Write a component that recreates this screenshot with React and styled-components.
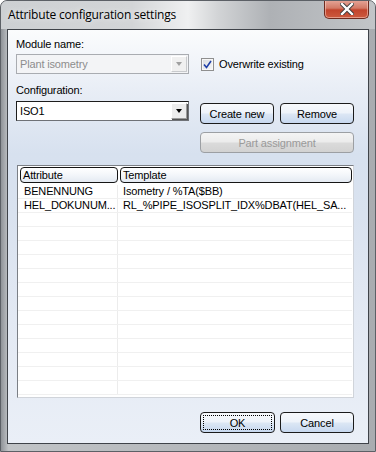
import React from 'react';
import styled, { createGlobalStyle } from 'styled-components';

const GlobalStyle = createGlobalStyle`
  html, body {
    margin: 0;
    padding: 0;
    background: #ffffff;
  }
  body {
    font-family: "Liberation Sans", Arial, sans-serif;
    font-size: 11px;
    letter-spacing: -0.15px;
    color: #000;
  }
`;

const Window = styled.div`
  width: 376px;
  height: 452px;
  box-sizing: border-box;
  display: flex;
  flex-direction: column;
  border: 1px solid #5c6066;
  border-radius: 7px 7px 0 0;
  background: linear-gradient(90deg, #8f9398 0%, #c1c4c7 2%, #a9acb0 100%);
  overflow: hidden;
`;

const TitleBar = styled.div`
  height: 28px;
  display: flex;
  align-items: flex-start;
  justify-content: space-between;
  padding: 0 6px 0 7px;
  background: linear-gradient(
    90deg,
    #cdd0d3 0%,
    #d3d5d7 35%,
    #eff0f1 50%,
    #d2d4d6 58%,
    #aeb1b5 72%,
    #c2c5c8 100%
  );
`;

const Title = styled.span`
  font-family: "Open Sans", "Noto Sans", sans-serif;
  font-size: 12px;
  line-height: 16px;
  margin-top: 6px;
  color: #000;
  letter-spacing: -0.2px;
  text-shadow: 0 0 6px rgba(255, 255, 255, 0.9);
`;

const CloseButton = styled.div`
  width: 45px;
  height: 19px;
  margin-top: -1px;
  box-sizing: border-box;
  border: 1px solid #6e2b1f;
  border-top: none;
  border-radius: 0 0 5px 5px;
  background: linear-gradient(180deg, #e6a79a 0%, #d37a66 45%, #c2442c 55%, #cc5a3e 100%);
  box-shadow: inset 0 0 0 1px rgba(255, 220, 210, 0.5);
  display: flex;
  align-items: center;
  justify-content: center;
`;

const Client = styled.div`
  flex: 1;
  margin: 0 6px 7px 6px;
  border: 1px solid #3f4349;
  background: linear-gradient(
    180deg,
    #fbfcfd 0%,
    #e9eef6 14%,
    #d7e1ef 30%,
    #d9e2ef 45%,
    #e3e9f3 70%,
    #eaeff7 100%
  );
  padding: 8px 14px 0 8px;
  display: flex;
  flex-direction: column;
`;

const TopGrid = styled.div`
  display: grid;
  grid-template-columns: 173px 154px;
  column-gap: 11px;
`;

const Column = styled.div`
  display: flex;
  flex-direction: column;
  padding-top: ${(p) => p.$top || 0}px;
`;

const Label = styled.div`
  height: 13px;
  line-height: 13px;
  margin-top: ${(p) => p.$top || 0}px;
  white-space: nowrap;
`;

const Combo = styled.div`
  height: 20px;
  margin-top: ${(p) => p.$top || 0}px;
  box-sizing: border-box;
  display: flex;
  align-items: stretch;
  border: 1px solid ${(p) => (p.$disabled ? '#a9acb1' : '#6f7277')};
  border-top-color: ${(p) => (p.$disabled ? '#a9acb1' : '#1d1d1d')};
  border-left-color: ${(p) => (p.$disabled ? '#a9acb1' : '#1d1d1d')};
  background: ${(p) => (p.$disabled ? '#f3f4f6' : '#ffffff')};
  color: ${(p) => (p.$disabled ? '#8d8d8d' : '#000')};
`;

const ComboText = styled.div`
  flex: 1;
  padding-left: 3px;
  line-height: 18px;
`;

const ComboArrow = styled.div`
  width: 16px;
  margin: 1px;
  box-sizing: border-box;
  border: 1px solid ${(p) => (p.$disabled ? '#c8cacd' : '#9a9a9a')};
  border-top-color: #ffffff;
  border-left-color: #ffffff;
  background: ${(p) => (p.$disabled ? '#f0f0f0' : '#ececec')};
  box-shadow: ${(p) => (p.$disabled ? 'none' : '1px 1px 0 #555')};
  display: flex;
  align-items: center;
  justify-content: center;
  &::after {
    content: '';
    border-left: 3.5px solid transparent;
    border-right: 3.5px solid transparent;
    border-top: 4px solid ${(p) => (p.$disabled ? '#a0a0a0' : '#000')};
  }
`;

const CheckRow = styled.label`
  height: 20px;
  display: flex;
  align-items: center;
  gap: 5px;
  padding-left: 1px;
`;

const CheckBox = styled.span`
  width: 13px;
  height: 13px;
  box-sizing: border-box;
  border: 1px solid #8f8f8f;
  background: linear-gradient(135deg, #d9dcdf 0%, #f5f6f7 100%);
  box-shadow: inset 0 0 0 1px #f7f7f7;
  display: flex;
  align-items: center;
  justify-content: center;
`;

const ButtonRow = styled.div`
  display: flex;
  justify-content: ${(p) => p.$justify || 'space-between'};
  gap: ${(p) => p.$gap || 0}px;
  margin-top: ${(p) => p.$top || 0}px;
`;

const Button = styled.div`
  width: ${(p) => p.$width || 74}px;
  height: 21px;
  box-sizing: border-box;
  border: 1px solid ${(p) => (p.$disabled ? '#9c9fa3' : '#1b1b1b')};
  border-radius: 4px;
  background: ${(p) =>
    p.$disabled
      ? 'linear-gradient(180deg, #f4f4f4 0%, #ececec 45%, #dadada 55%, #d2d2d2 100%)'
      : 'linear-gradient(180deg, #f7f9fc 0%, #eef3fa 45%, #dbe6f4 55%, #c7d8ef 100%)'};
  color: ${(p) => (p.$disabled ? '#9a9a9a' : '#000')};
  display: flex;
  align-items: center;
  justify-content: center;
  padding: 2px;
`;

const FocusRect = styled.div`
  flex: 1;
  align-self: stretch;
  border: 1px dotted ${(p) => (p.$on ? '#000' : 'transparent')};
  display: flex;
  align-items: center;
  justify-content: center;
`;

const List = styled.div`
  margin: 12px 0 0 1px;
  height: 233px;
  box-sizing: border-box;
  border: 1px solid #7b7f85;
  border-right-color: #d0d4da;
  border-bottom-color: #d0d4da;
  background: #ffffff;
  padding: 1px 1px 0 2px;
  overflow: hidden;
`;

const HeaderRow = styled.div`
  display: grid;
  grid-template-columns: 98px 1fr;
  gap: 2px;
  height: 16px;
  margin-bottom: 2px;
`;

const HeaderCell = styled.div`
  box-sizing: border-box;
  border: 1px solid #151515;
  border-radius: 4px;
  background: linear-gradient(180deg, #ffffff 0%, #f3f6fa 50%, #e4eaf2 100%);
  padding-left: 2px;
  line-height: 14px;
`;

const Row = styled.div`
  display: grid;
  grid-template-columns: 100px 1fr;
  height: 14px;
  box-sizing: border-box;
  border-bottom: 1px solid #f0f0f0;
  margin-left: -2px;
`;

const Cell = styled.div`
  padding-left: ${(p) => p.$pad || 6}px;
  line-height: 13px;
  white-space: nowrap;
  overflow: hidden;
  border-right: ${(p) => (p.$divider ? '1px solid #ececec' : 'none')};
`;

const rows = [
  ['BENENNUNG', 'Isometry / %TA($BB)'],
  ['HEL_DOKUNUM...', 'RL_%PIPE_ISOSPLIT_IDX%DBAT(HEL_SA...'],
];

const emptyRows = Array.from({ length: 13 });

const App = () => {
  return (
    <>
      <GlobalStyle />
      <Window>
        <TitleBar>
          <Title>Attribute configuration settings</Title>
          <CloseButton>
            <svg width="14" height="12" viewBox="0 0 14 12">
              <path
                d="M2 1 L12 11 M12 1 L2 11"
                stroke="#3c3c3c"
                strokeWidth="4.2"
                strokeLinecap="square"
              />
              <path
                d="M2 1 L12 11 M12 1 L2 11"
                stroke="#ffffff"
                strokeWidth="2.4"
                strokeLinecap="square"
              />
            </svg>
          </CloseButton>
        </TitleBar>
        <Client>
          <TopGrid>
            <Column>
              <Label>Module name:</Label>
              <Combo $top={3} $disabled>
                <ComboText>Plant isometry</ComboText>
                <ComboArrow $disabled />
              </Combo>
              <Label $top={10}>Configuration:</Label>
              <Combo $top={4}>
                <ComboText>ISO1</ComboText>
                <ComboArrow />
              </Combo>
            </Column>
            <Column $top={16}>
              <CheckRow>
                <CheckBox>
                  <svg width="9" height="9" viewBox="0 0 9 9">
                    <path
                      d="M1 4.5 L3.5 7.5 L8 1"
                      fill="none"
                      stroke="#1f3fa8"
                      strokeWidth="1.6"
                    />
                  </svg>
                </CheckBox>
                <span>Overwrite existing</span>
              </CheckRow>
              <ButtonRow $top={29}>
                <Button $width={74}>Create new</Button>
                <Button $width={74}>Remove</Button>
              </ButtonRow>
              <ButtonRow $top={8}>
                <Button $width={154} $disabled>
                  Part assignment
                </Button>
              </ButtonRow>
            </Column>
          </TopGrid>
          <List>
            <HeaderRow>
              <HeaderCell>Attribute</HeaderCell>
              <HeaderCell>Template</HeaderCell>
            </HeaderRow>
            {rows.map(([a, t]) => (
              <Row key={a}>
                <Cell $divider>{a}</Cell>
                <Cell $pad={5}>{t}</Cell>
              </Row>
            ))}
            {emptyRows.map((_, i) => (
              <Row key={i}>
                <Cell $divider />
                <Cell />
              </Row>
            ))}
          </List>
          <ButtonRow $top={14} $justify="flex-end" $gap={5}>
            <Button $width={75}>
              <FocusRect $on>OK</FocusRect>
            </Button>
            <Button $width={74}>
              <FocusRect>Cancel</FocusRect>
            </Button>
          </ButtonRow>
        </Client>
      </Window>
    </>
  );
};

export default App;
